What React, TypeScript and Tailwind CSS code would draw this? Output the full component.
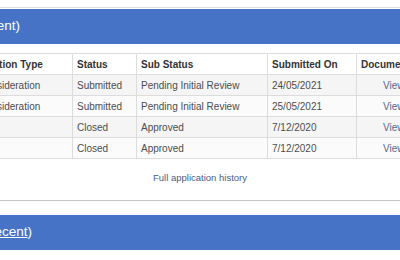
import React from "react";

type Row = {
  type: string;
  status: string;
  sub: string;
  date: string;
};

const rows: Row[] = [
  { type: "Reconsideration", status: "Submitted", sub: "Pending Initial Review", date: "24/05/2021" },
  { type: "Reconsideration", status: "Submitted", sub: "Pending Initial Review", date: "25/05/2021" },
  { type: "New", status: "Closed", sub: "Approved", date: "7/12/2020" },
  { type: "New", status: "Closed", sub: "Approved", date: "7/12/2020" },
];

// heading text is right-anchored so the long title runs off to the left
function PanelHeading({ children, endAt }: { children: React.ReactNode; endAt: string }) {
  return (
    <div className="flex h-[35px] items-center bg-[#4673c6] pl-[16px] text-[13.5px] text-white">
      <div className={`flex ${endAt} justify-end whitespace-nowrap`}>{children}</div>
    </div>
  );
}

export default function App() {
  const cell = "border border-[#dcdcdc] px-[4px] h-[21px] align-middle";
  return (
    <div className="h-[260px] w-[400px] overflow-hidden bg-white font-['Liberation_Sans',Arial,sans-serif]">
      <div className="h-[7px]" />
      <div className="h-px w-full bg-[#dedede]" />

      <div className="-ml-[60px] mt-px w-[520px] border-b border-[#c3c3c8]">
        <PanelHeading endAt="w-[64px]">Recent Applications (Most recent)</PanelHeading>

        <div className="pl-[16px] pt-[9px]">
          <table className="table-fixed border-collapse text-[10px] text-[#4d4d4d]">
            <colgroup>
              <col className="w-[116px]" />
              <col className="w-[64px]" />
              <col className="w-[131px]" />
              <col className="w-[89px]" />
              <col className="w-[80px]" />
            </colgroup>
            <thead>
              <tr className="text-left text-[10px] font-bold text-[#333]">
                <th className={`${cell} pl-[6px]`}>Application Type</th>
                <th className={cell}>Status</th>
                <th className={cell}>Sub Status</th>
                <th className={cell}>Submitted On</th>
                <th className={cell}>Documents</th>
              </tr>
            </thead>
            <tbody>
              {rows.map((r, i) => (
                <tr key={i} className={i % 2 === 0 ? "bg-[#f5f5f5]" : "bg-[#fbfbfb]"}>
                  <td className={`${cell} pl-[11px]`}>{r.type}</td>
                  <td className={cell}>{r.status}</td>
                  <td className={cell}>{r.sub}</td>
                  <td className={cell}>{r.date}</td>
                  <td className={`${cell} pl-[26px] text-[#56688c]`}>View</td>
                </tr>
              ))}
            </tbody>
          </table>
        </div>

        <div className="flex h-[41px] items-center justify-center pb-[3px] text-[9.5px] text-[#4b5d86]">
          Full application history
        </div>
      </div>

      <div className="-ml-[60px] mt-[14px] w-[520px]">
        <PanelHeading endAt="w-[76px]">
          <span>
            Closed Applications (<span className="underline">Most recent</span>)
          </span>
        </PanelHeading>
      </div>
    </div>
  );
}
